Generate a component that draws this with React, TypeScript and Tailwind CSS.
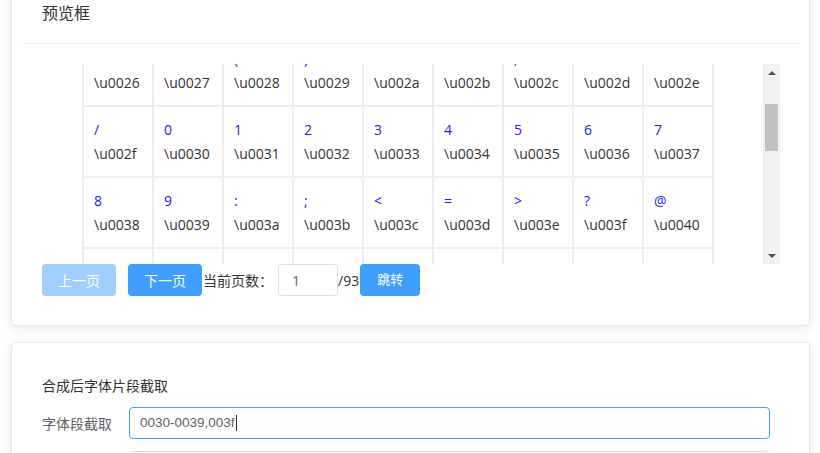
import React from 'react'

const FONT = {
  fontFamily:
    '"Open Sans", "Noto Sans CJK SC", "Liberation Sans", sans-serif',
}

const START = 0x1d
const ROWS = 10

function hex4(n: number) {
  return n.toString(16).padStart(4, '0')
}

function glyphOf(n: number) {
  if (n < 0x21) return '\u00a0'
  return String.fromCharCode(n)
}

function FakeScrollbar() {
  return (
    <div className="flex w-[17px] h-[200px] flex-col items-center bg-[#f1f1f1]">
      <div className="flex h-[17px] w-full items-center justify-center">
        <div className="h-0 w-0 border-x-[4px] border-b-[4px] border-x-transparent border-b-[#505050]" />
      </div>
      <div className="w-full flex-1 px-[2px] pt-[23px]">
        <div className="h-[47px] w-full bg-[#c1c1c1]" />
      </div>
      <div className="flex h-[17px] w-full items-center justify-center">
        <div className="h-0 w-0 border-x-[4px] border-t-[4px] border-x-transparent border-t-[#505050]" />
      </div>
    </div>
  )
}

function CharCell({ code }: { code: number }) {
  return (
    <div className="h-[69px] bg-white pl-[10px] pt-[11px]">
      <div className="h-[24px] text-[14px] leading-[24px] text-[#2020f2]">
        {glyphOf(code)}
      </div>
      <div className="text-[14px] leading-[24px] text-[#333]">
        \u{hex4(code)}
      </div>
    </div>
  )
}

function PreviewCard() {
  const codes = Array.from({ length: ROWS * 9 }, (_, i) => START + i)
  return (
    <div className="-mt-[10px] rounded-[4px] border border-[#e4e7ed] bg-white shadow-[0_2px_12px_0_rgba(0,0,0,0.1)]">
      <div className="ml-[10px] mr-[9px] border-b border-[#ebeef5] pb-[19px] pl-[20px] pt-[11px] text-[16px] leading-[22px] text-[#303133]">
        预览框
      </div>
      <div className="ml-[30px] mt-[20px] flex w-[738px]">
        <div className="h-[200px] flex-1 overflow-hidden pl-[40px]">
          <div className="-mt-[101px] grid w-[632px] grid-cols-[repeat(9,68px)] gap-[2px] bg-[#eeeeee] p-[2px]">
            {codes.map((c) => (
              <CharCell key={c} code={c} />
            ))}
          </div>
        </div>
        <FakeScrollbar />
      </div>
      <div className="ml-[30px] flex items-center pb-[29px] text-[14px]">
        <button className="h-[32px] w-[74px] rounded-[4px] bg-[#a0cfff] text-white">
          上一页
        </button>
        <button className="ml-[12px] h-[32px] w-[74px] rounded-[4px] bg-[#409eff] text-white">
          下一页
        </button>
        <span className="ml-[1px] text-[#333]">当前页数：</span>
        <div className="ml-[5px] flex h-[32px] w-[60px] items-center rounded-[4px] border border-[#dcdfe6] pl-[13px] text-[#606266]">
          1
        </div>
        <span className="text-[#333]">/93</span>
        <button className="ml-[1px] h-[32px] w-[60px] rounded-[4px] bg-[#409eff] text-[13px] text-white">
          跳转
        </button>
      </div>
    </div>
  )
}

function ClipCard() {
  return (
    <div className="mt-[16px] rounded-[4px] border border-[#e4e7ed] bg-white pb-[40px] pl-[30px] pr-[39px] pt-[33px] shadow-[0_2px_12px_0_rgba(0,0,0,0.1)]">
      <div className="text-[14px] leading-[20px] text-[#303133]">
        合成后字体片段截取
      </div>
      <div className="mt-[11px] flex items-center">
        <div className="w-[87px] text-[14px] text-[#606266]">字体段截取</div>
        <div
          className="flex h-[32px] flex-1 items-center rounded-[4px] border border-[#409eff] pl-[10px] text-[13.5px] text-[#606266]"
          style={{ fontFamily: '"Liberation Sans", sans-serif' }}
        >
          0030-0039,003f
          <span className="ml-[1px] h-[16px] w-[1px] bg-[#303133]" />
        </div>
      </div>
      <div className="mt-[12px] flex items-center">
        <div className="w-[87px]" />
        <div className="h-[32px] flex-1 rounded-[4px] border border-[#dcdfe6]" />
      </div>
    </div>
  )
}

export default function App() {
  return (
    <div
      className="h-[453px] w-[820px] overflow-hidden bg-white pl-[11px] pr-[10px]"
      style={FONT}
    >
      <PreviewCard />
      <ClipCard />
    </div>
  )
}
